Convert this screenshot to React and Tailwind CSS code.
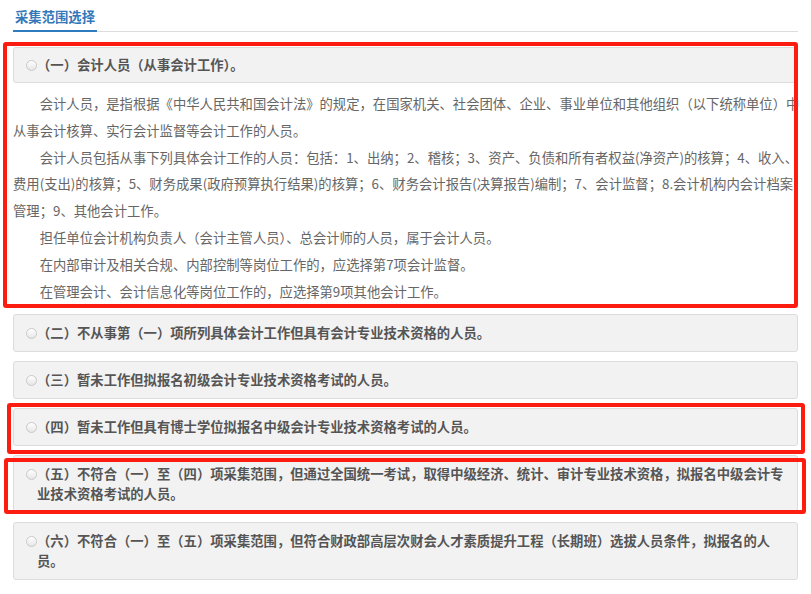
import React from 'react';

const cards = [
  { id: 2, lines: ['（二）不从事第（一）项所列具体会计工作但具有会计专业技术资格的人员。'] },
  { id: 3, lines: ['（三）暂未工作但拟报名初级会计专业技术资格考试的人员。'] },
  { id: 4, lines: ['（四）暂未工作但具有博士学位拟报名中级会计专业技术资格考试的人员。'] },
  {
    id: 5,
    lines: [
      '（五）不符合（一）至（四）项采集范围，但通过全国统一考试，取得中级经济、统计、审计专业技术资格，拟报名中级会计专',
      '业技术资格考试的人员。',
    ],
  },
  {
    id: 6,
    lines: [
      '（六）不符合（一）至（五）项采集范围，但符合财政部高层次财会人才素质提升工程（长期班）选拔人员条件，拟报名的人',
      '员。',
    ],
  },
];

const paragraphs = [
  [
    '会计人员，是指根据《中华人民共和国会计法》的规定，在国家机关、社会团体、企业、事业单位和其他组织（以下统称单位）中',
    '从事会计核算、实行会计监督等会计工作的人员。',
  ],
  [
    '会计人员包括从事下列具体会计工作的人员：包括：1、出纳；2、稽核；3、资产、负债和所有者权益(净资产)的核算；4、收入、',
    '费用(支出)的核算；5、财务成果(政府预算执行结果)的核算；6、财务会计报告(决算报告)编制；7、会计监督；8.会计机构内会计档案',
    '管理；9、其他会计工作。',
  ],
  ['担任单位会计机构负责人（会计主管人员）、总会计师的人员，属于会计人员。'],
  ['在内部审计及相关合规、内部控制等岗位工作的，应选择第7项会计监督。'],
  ['在管理会计、会计信息化等岗位工作的，应选择第9项其他会计工作。'],
];

function Radio() {
  return (
    <span className="mt-[4.5px] h-[11px] w-[11px] shrink-0 rounded-full border border-[#c9c9c9] bg-gradient-to-b from-white to-[#e6e6e6]" />
  );
}

function OptionCard({ lines, py = 'py-[8px]' }) {
  return (
    <div className={`flex rounded-[3px] border border-[#dcdcdc] bg-[#f2f2f2] pl-[12px] pr-[10px] ${py}`}>
      <Radio />
      <div className="whitespace-nowrap text-[13.33px] font-bold leading-[20px] text-[#555]">
        {lines.map((l, i) => (
          <div key={i}>{l}</div>
        ))}
      </div>
    </div>
  );
}

function RedBox({ className }) {
  return <div className={`pointer-events-none absolute rounded-[3px] border-[4px] border-[#fd1d10] ${className}`} />;
}

export default function App() {
  return (
    <div className="relative h-[594px] w-[811px] overflow-hidden bg-white font-['Microsoft_YaHei','Noto_Sans_CJK_SC',sans-serif]">
      <div className="ml-[13px] w-[785px]">
        {/* tab bar */}
        <div className="flex border-b border-[#dddddd]">
          <div className="-mb-px border-b-2 border-[#2f7bbf] px-[2px] pb-[3px] pt-[7px] text-[13.33px] font-bold leading-[20px] text-[#3478b9]">
            采集范围选择
          </div>
        </div>

        <div className="mt-[15px] flex flex-col gap-[9px]">
          <div>
            <OptionCard py="py-[7px]" lines={['（一）会计人员（从事会计工作）。']} />
            <div className="pt-[8px] text-[13.33px] leading-[26.8px] text-[#666]">
              {paragraphs.map((p, i) => (
                <p key={i} className="whitespace-nowrap indent-[2em]">
                  {p.map((l, j) => (
                    <React.Fragment key={j}>
                      {j > 0 && <br />}
                      {l}
                    </React.Fragment>
                  ))}
                </p>
              ))}
            </div>
          </div>
          {cards.map((c) => (
            <OptionCard key={c.id} lines={c.lines} />
          ))}
        </div>
      </div>

      <RedBox className="left-[3px] top-[42px] h-[266px] w-[795px]" />
      <RedBox className="left-[7px] top-[403px] h-[51px] w-[798px]" />
      <RedBox className="left-[4px] top-[458px] h-[56px] w-[802px]" />
    </div>
  );
}
